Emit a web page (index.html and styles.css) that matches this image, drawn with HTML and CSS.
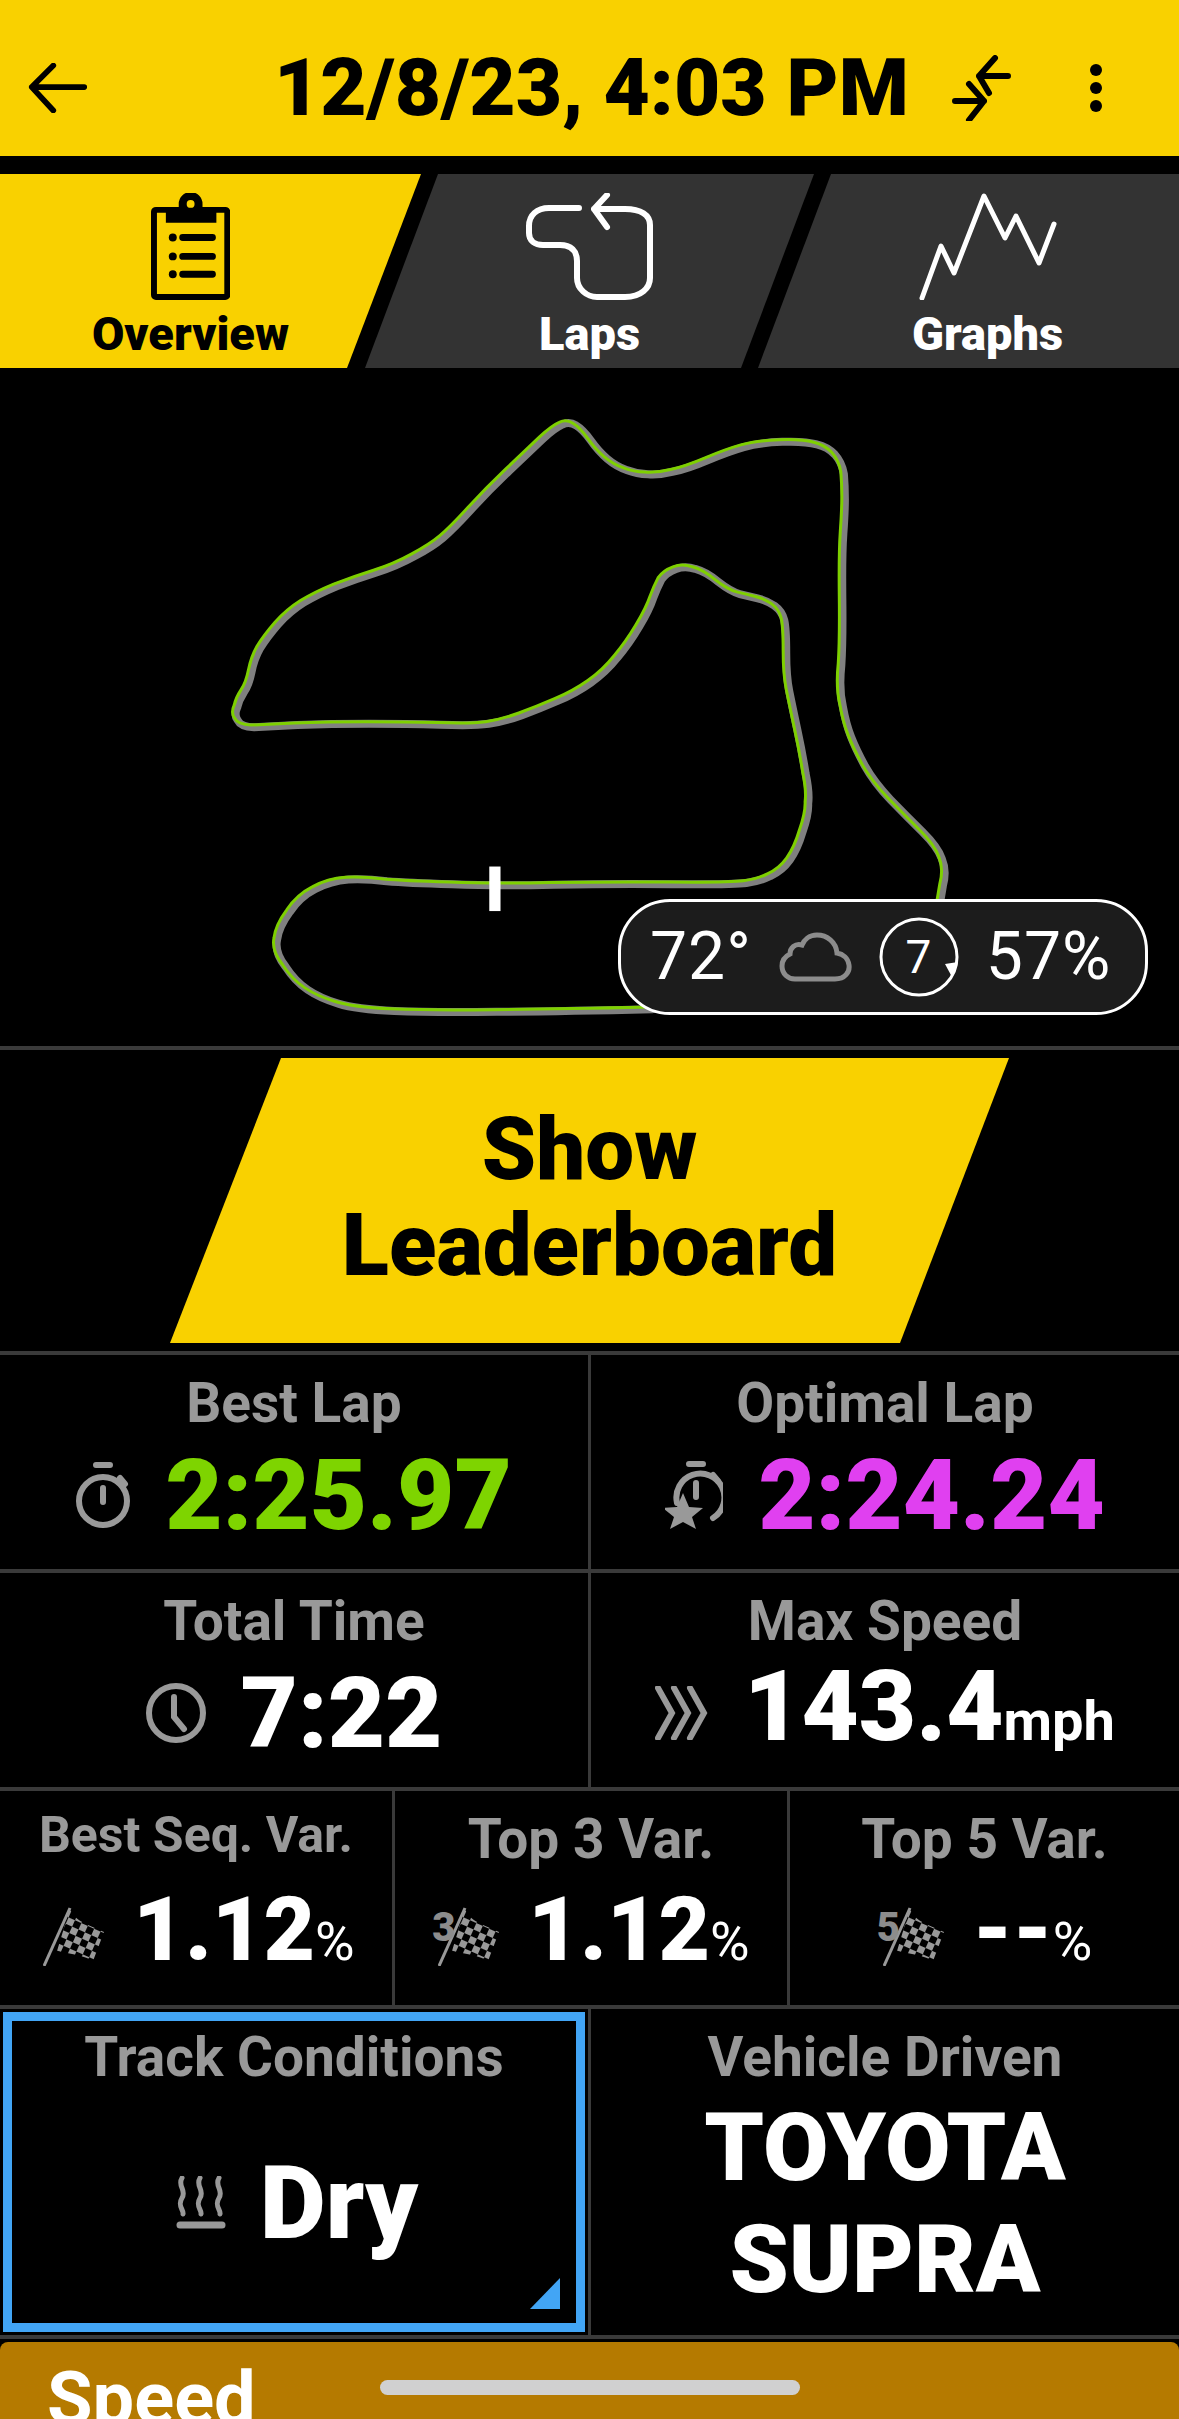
FILE: index.html
```html
<!DOCTYPE html>
<html>

<head>
  <title>Session overview</title>
  <link rel="stylesheet" href="styles.css">
</head>

<body>
  <div class="page">
    <header class="topbar">
      <svg class="back-icon" viewBox="0 0 64 52"><path d="M60 25H4M27 2L4 25l23 25" /></svg>
      <h1 class="title">12/8/23, 4:03 PM</h1>
      <svg class="compress-icon" viewBox="0 0 60 66"><path d="M56 21H27M43 3L27 21l10 17M3 46h29M17 29l15 17-15 19" /></svg>
      <svg class="dots-icon" viewBox="0 0 14 50"><circle cx="7" cy="7" r="6" /><circle cx="7" cy="25" r="6" /><circle cx="7" cy="43" r="6" /></svg>
    </header>

    <nav class="tabs">
      <div class="tab tab-overview">
        <svg class="tab-icon clip-icon" viewBox="0 0 80 108">
          <rect x="3" y="17" width="74" height="88" rx="2" class="clip-board" />
          <path d="M15 30V17h13v-6a12 12 0 0 1 24 0v6h14v13z" class="clip-top" />
          <circle cx="40" cy="11" r="4" class="clip-hole" />
          <path d="M32 45h30M32 64h30M32 82h30" class="clip-line" />
          <circle cx="22" cy="45" r="4" /><circle cx="22" cy="64" r="4" /><circle cx="22" cy="82" r="4" />
        </svg>
        <span>Overview</span>
      </div>
      <div class="tab tab-laps">
        <svg class="tab-icon laps-icon" viewBox="0 0 130 107"><path d="M54 15H24C12 15 4 22 4 33v7c0 8 6 12 14 12h17c11 0 17 6 17 16v17c0 11 10 19 20 19h28c16 0 25-9 25-19V32c0-10-9-16-25-16H69M82 2L69 16l13 18" /></svg>
        <span>Laps</span>
      </div>
      <div class="tab tab-graphs">
        <svg class="tab-icon graph-icon" viewBox="0 0 138 107"><path d="M3 105L22 53l13 27L65 3l21 42 11-22 23 47 15-39" /></svg>
        <span>Graphs</span>
      </div>
    </nav>

    <section class="map">
      <svg class="track" viewBox="0 0 1568 1540" preserveAspectRatio="none">
        <defs>
          <path id="track-line" class="track-path" d="M688 1162Q800 1160 920 1161Q1040 1162 1065 1158Q1090 1155 1112 1142Q1135 1130 1150 1105Q1165 1080 1175 1040Q1187 1000 1186 975Q1189 950 1181 905Q1175 860 1165 805Q1155 750 1149 715Q1143 680 1143 625Q1143 570 1139 550Q1135 530 1120 517Q1105 505 1087 500Q1070 495 1052 490Q1035 485 1010 462Q985 438 965 432Q945 424 927 432Q908 440 898 457Q890 475 882 500Q875 525 855 565Q835 605 812 637Q790 670 760 695Q730 720 695 737Q660 755 625 770Q590 785 560 790Q530 795 465 792Q400 790 325 790Q250 790 185 793Q120 797 100 798Q74 797 68 782Q60 770 67 752Q70 735 80 717Q90 700 95 670Q100 640 112 615Q125 590 147 560Q170 530 197 510Q225 490 262 472Q300 455 340 440Q380 425 415 402Q450 380 470 360Q490 340 525 295Q560 250 600 205Q640 160 665 132Q690 105 704 98Q718 90 731 100Q745 110 760 135Q775 160 792 177Q810 195 830 203Q850 212 872 213Q895 215 922 207Q950 200 990 180Q1030 160 1060 150Q1090 140 1135 138Q1180 136 1203 144Q1224 150 1238 167Q1252 185 1256 212Q1258 240 1258 270Q1258 300 1255 350Q1252 400 1253 500Q1254 600 1251 655Q1246 710 1254 750Q1260 790 1270 820Q1280 850 1297 887Q1315 925 1347 965Q1380 1005 1410 1040Q1440 1075 1448 1102Q1458 1130 1450 1165L1445 1200L1400 1300L880 1450Q700 1455 575 1456Q450 1458 375 1454Q300 1450 265 1437Q230 1425 205 1405Q180 1385 162 1352Q140 1320 145 1290Q148 1260 170 1225Q190 1190 220 1172Q250 1153 285 1150Q320 1148 360 1154Q400 1158 488 1161Q577 1165 688 1162Z" />
        </defs>
        <use href="#track-line" class="track-grey" transform="translate(6 5)" />
        <use href="#track-line" class="track-green" />
        <rect x="567" y="1125" width="22" height="103" class="start-line" />
      </svg>
      <div class="weather">
        <span>72°</span>
        <svg class="cloud-icon" viewBox="0 0 73 50"><path d="M16 47h40c10 0 15-7 14-14-1-7-6-11-12-12C57 10 48 3 38 3c-8 0-13 5-15 10-7-2-12 3-12 9-6 3-8 8-8 12 0 8 6 13 13 13z" /></svg>
        <div class="wind">
          <svg viewBox="0 0 80 80"><circle cx="40" cy="40" r="38" /><path d="M66 47l13-2-6 15z" /></svg>
          <span>7</span>
        </div>
        <span>57%</span>
      </div>
    </section>

    <div class="leader-wrap">
      <button class="leader-btn">Show<br>Leaderboard</button>
    </div>

    <div class="row row-two">
      <div class="cell">
        <div class="label">Best Lap</div>
        <div class="value-line">
          <svg class="stat-icon watch" viewBox="0 0 54 66"><path d="M20 3h14M27 26v14M44 16l5 6" /><circle cx="27" cy="39" r="24" /></svg>
          <span class="value green">2:25.97</span>
        </div>
      </div>
      <div class="cell">
        <div class="label">Optimal Lap</div>
        <div class="value-line">
          <svg class="stat-icon watch-star" viewBox="0 0 58 68"><path d="M24 3h14M31 22v14M48 14l5 6" /><path d="M12 42a24 24 0 1 1 36 15" /><path class="icon-fill" d="M18 32l6 14 14 1-11 9 4 12-13-7-13 7 4-12-11-9 14-1z" /></svg>
          <span class="value magenta">2:24.24</span>
        </div>
      </div>
    </div>

    <div class="row row-two">
      <div class="cell">
        <div class="label">Total Time</div>
        <div class="value-line">
          <svg class="stat-icon clock" viewBox="0 0 60 60"><circle cx="30" cy="30" r="27" /><path d="M28 14v20l10 12" /></svg>
          <span class="value">7:22</span>
        </div>
      </div>
      <div class="cell">
        <div class="label">Max Speed</div>
        <div class="value-line">
          <svg class="stat-icon chevrons" viewBox="0 0 54 54"><path d="M3 2l14 25L3 52M19 2l14 25-14 25M35 2l14 25-14 25" /></svg>
          <span class="value">143.4<small class="unit">mph</small></span>
        </div>
      </div>
    </div>

    <div class="row row-three">
      <div class="cell cell-seq">
        <div class="label label-small">Best Seq. Var.</div>
        <div class="value-line">
          <svg class="flag" viewBox="0 0 62 60">
            <defs>
              <pattern id="checker" width="14" height="14" patternUnits="userSpaceOnUse" patternTransform="rotate(24)">
                <rect width="7" height="7" class="check" /><rect x="7" y="7" width="7" height="7" class="check" />
              </pattern>
              <symbol id="flag-shape" viewBox="0 0 62 60">
                <path d="M1 60L27 2" class="flag-pole" />
                <path d="M27 2c3 12 16 16 34 24L50 55c-8-5-20-7-36-10z" fill="url(#checker)" class="flag-cloth" />
              </symbol>
            </defs>
            <use href="#flag-shape" />
          </svg>
          <span class="value value-small">1.12<small class="pct">%</small></span>
        </div>
      </div>
      <div class="cell">
        <div class="label label-mid">Top 3 Var.</div>
        <div class="value-line">
          <div class="flag-wrap">
            <svg class="flag" viewBox="0 0 62 60"><use href="#flag-shape" /></svg>
            <span class="flag-num">3</span>
          </div>
          <span class="value value-small">1.12<small class="pct">%</small></span>
        </div>
      </div>
      <div class="cell">
        <div class="label label-mid">Top 5 Var.</div>
        <div class="value-line">
          <div class="flag-wrap">
            <svg class="flag" viewBox="0 0 62 60"><use href="#flag-shape" /></svg>
            <span class="flag-num">5</span>
          </div>
          <span class="value value-small">--<small class="pct">%</small></span>
        </div>
      </div>
    </div>

    <div class="row row-two row-last">
      <div class="cell cell-track">
        <div class="label">Track Conditions</div>
        <div class="value-line dry-line">
          <svg class="stat-icon steam" viewBox="0 0 50 54"><path d="M6 2c-5 8 5 12 0 20s2 12 1 16M24 2c-5 8 5 12 0 20s2 12 1 16M43 2c-5 8 5 12 0 20s2 12 1 16" /><path class="steam-bar" d="M4 49h42" /></svg>
          <span class="value value-dry">Dry</span>
        </div>
        <span class="corner"></span>
      </div>
      <div class="cell">
        <div class="label">Vehicle Driven</div>
        <div class="vehicle">TOYOTA<br>SUPRA</div>
      </div>
    </div>

    <section class="speed">Speed</section>
    <div class="home-bar"></div>
  </div>
</body>

</html>
```

FILE: styles.css
```css
* {
  box-sizing: border-box;
}

body {
  margin: 0;
  background: #000;
  font-family: Roboto, "Liberation Sans", sans-serif;
  color: #fff;
}

.page {
  position: relative;
  width: 1179px;
  height: 2419px;
  overflow: hidden;
}

svg {
  display: block;
  flex: none;
}

/* top bar */
.topbar {
  display: flex;
  align-items: center;
  height: 156px;
  padding: 20px 76px 0 28px;
  background: #f9d100;
  color: #000;
}

.back-icon {
  width: 60px;
  height: 50px;
  fill: none;
  stroke: #000;
  stroke-width: 6;
  stroke-linecap: round;
  stroke-linejoin: round;
}

.title {
  margin: 0 0 0 186px;
  font-size: 80px;
  font-weight: 900;
  white-space: nowrap;
}

.compress-icon {
  width: 60px;
  height: 66px;
  margin-left: auto;
  fill: none;
  stroke: #000;
  stroke-width: 6;
  stroke-linecap: round;
  stroke-linejoin: round;
}

.dots-icon {
  width: 14px;
  height: 50px;
  margin-left: 77px;
}

/* tabs */
.tabs {
  display: flex;
  height: 194px;
  margin-top: 18px;
}

.tab {
  display: flex;
  flex-direction: column;
  align-items: center;
  font-size: 47px;
  font-weight: 900;
  line-height: 50px;
  padding-top: 19px;
}

.tab-icon {
  height: 107px;
  margin-bottom: 9px;
}

.tab-overview {
  width: 421px;
  padding-right: 40px;
  background: #f9d100;
  color: #000;
  clip-path: polygon(0 0, 100% 0, 347px 100%, 0 100%);
}

.tab-laps {
  width: 449px;
  margin-left: -56px;
  background: #333;
  clip-path: polygon(73px 0, 100% 0, 376px 100%, 0 100%);
}

.tab-graphs {
  width: 421px;
  margin-left: -56px;
  padding-left: 38px;
  background: #333;
  clip-path: polygon(73px 0, 100% 0, 100% 100%, 0 100%);
}

.clip-board {
  fill: none;
  stroke: #000;
  stroke-width: 6;
}

.clip-hole {
  fill: #f9d100;
}

.clip-line {
  fill: none;
  stroke: #000;
  stroke-width: 7;
  stroke-linecap: round;
}

.laps-icon {
  width: 130px;
  fill: none;
  stroke: #fff;
  stroke-width: 6;
  stroke-linecap: round;
  stroke-linejoin: round;
}

.graph-icon {
  width: 138px;
  fill: none;
  stroke: #fff;
  stroke-width: 5;
  stroke-linecap: round;
  stroke-linejoin: round;
}

/* map */
.map {
  position: relative;
  height: 678px;
  padding: 12px 0 0 200px;
}

.track {
  width: 800px;
  height: 666px;
  overflow: visible;
}

.track-path {
  vector-effect: non-scaling-stroke;
}

.track-grey {
  fill: none;
  stroke: #808080;
  stroke-width: 8;
}

.track-green {
  fill: none;
  stroke: #7ed000;
  stroke-width: 3;
}

.start-line {
  fill: #fff;
}

.weather {
  position: absolute;
  right: 31px;
  bottom: 31px;
  display: flex;
  align-items: center;
  gap: 27px;
  width: 530px;
  height: 116px;
  padding-left: 29px;
  background: #1c1c1c;
  border: 3px solid #fff;
  border-radius: 52px;
  font-size: 66px;
  letter-spacing: 1px;
  line-height: 1;
}

.cloud-icon {
  width: 73px;
  height: 50px;
  fill: none;
  stroke: #8c8c8c;
  stroke-width: 5;
}

.wind {
  position: relative;
  display: flex;
  align-items: center;
  justify-content: center;
  width: 80px;
  height: 80px;
  font-size: 46px;
}

.wind svg {
  position: absolute;
  inset: 0;
  fill: #fff;
}

.wind circle {
  fill: none;
  stroke: #fff;
  stroke-width: 3;
}

/* leaderboard button */
.leader-wrap {
  height: 305px;
  padding-top: 8px;
  border-top: 4px solid #3a3a3a;
}

.leader-btn {
  display: block;
  width: 839px;
  height: 285px;
  margin-left: 170px;
  padding: 0 0 8px;
  border: 0;
  background: #f9d100;
  clip-path: polygon(111px 0, 100% 0, 730px 100%, 0 100%);
  color: #000;
  font-family: inherit;
  font-size: 87px;
  font-weight: 900;
  line-height: 96px;
}

/* stat rows */
.row {
  display: grid;
  border-top: 4px solid #3a3a3a;
}

.row-two {
  grid-template-columns: 588px 1fr;
  height: 218px;
}

.row-three {
  grid-template-columns: 392px 395px 1fr;
  height: 218px;
}

.row-last {
  height: 334px;
  border-bottom: 4px solid #3a3a3a;
}

.cell {
  position: relative;
  display: flex;
  flex-direction: column;
  align-items: center;
  padding-top: 18px;
}

.cell + .cell {
  border-left: 3px solid #3a3a3a;
}

.label {
  color: #999;
  font-size: 55px;
  font-weight: 700;
  line-height: 60px;
  white-space: nowrap;
}

.label-small {
  font-size: 50px;
  margin-top: -4px;
}

.value-line {
  display: flex;
  align-items: center;
  gap: 35px;
  height: 100px;
  margin-top: 12px;
}

.value {
  font-size: 99px;
  font-weight: 900;
  line-height: 100px;
  white-space: nowrap;
}

.green {
  color: #7ed400;
}

.magenta {
  color: #e040f0;
}

.unit {
  font-size: 56px;
  font-weight: 700;
}

.stat-icon {
  fill: none;
  stroke: #999;
  stroke-width: 6;
  stroke-linecap: round;
}

.watch {
  width: 54px;
  height: 66px;
}

.watch-star {
  width: 58px;
  height: 68px;
}

.icon-fill {
  fill: #999;
  stroke: none;
}

.clock {
  width: 60px;
  height: 60px;
}

.chevrons {
  width: 54px;
  height: 54px;
}

/* flags */
.row-three .value-line {
  gap: 28px;
  margin-top: 17px;
  margin-left: 6px;
}

.row-three .cell-seq .value-line {
  margin-top: 21px;
}

.flag {
  width: 62px;
  height: 60px;
}

.flag-wrap {
  position: relative;
}

.flag-num {
  position: absolute;
  top: 2px;
  left: -6px;
  color: #8c8c8c;
  font-size: 40px;
  font-weight: 900;
  line-height: 40px;
}

.check {
  fill: #999;
}

.flag-pole {
  fill: none;
  stroke: #999;
  stroke-width: 3;
}

.value-small {
  font-size: 89px;
}

.pct {
  font-size: 54px;
  font-weight: 400;
}

/* bottom row */
.cell-track {
  margin: 3px;
  padding-top: 6px;
  border: 9px solid #42a5f5;
}

.dry-line {
  gap: 34px;
  margin-top: 66px;
  margin-left: 6px;
}

.steam {
  width: 50px;
  height: 54px;
  stroke-width: 5;
}

.steam-bar {
  stroke-width: 7;
}

.value-dry {
  font-size: 102px;
}

.corner {
  position: absolute;
  right: 16px;
  bottom: 14px;
  width: 30px;
  height: 31px;
  background: #42a5f5;
  clip-path: polygon(100% 0, 100% 100%, 0 100%);
}

.vehicle {
  margin-top: 5px;
  font-size: 95px;
  font-weight: 900;
  line-height: 112px;
  text-align: center;
}

.speed {
  height: 90px;
  margin-top: 3px;
  padding: 12px 0 0 47px;
  background: #b57a00;
  border-radius: 8px 8px 0 0;
  font-size: 74px;
  font-weight: 700;
  line-height: 90px;
}

.home-bar {
  position: absolute;
  left: 380px;
  top: 2380px;
  width: 420px;
  height: 15px;
  background: #d0d0d0;
  border-radius: 8px;
}
```
